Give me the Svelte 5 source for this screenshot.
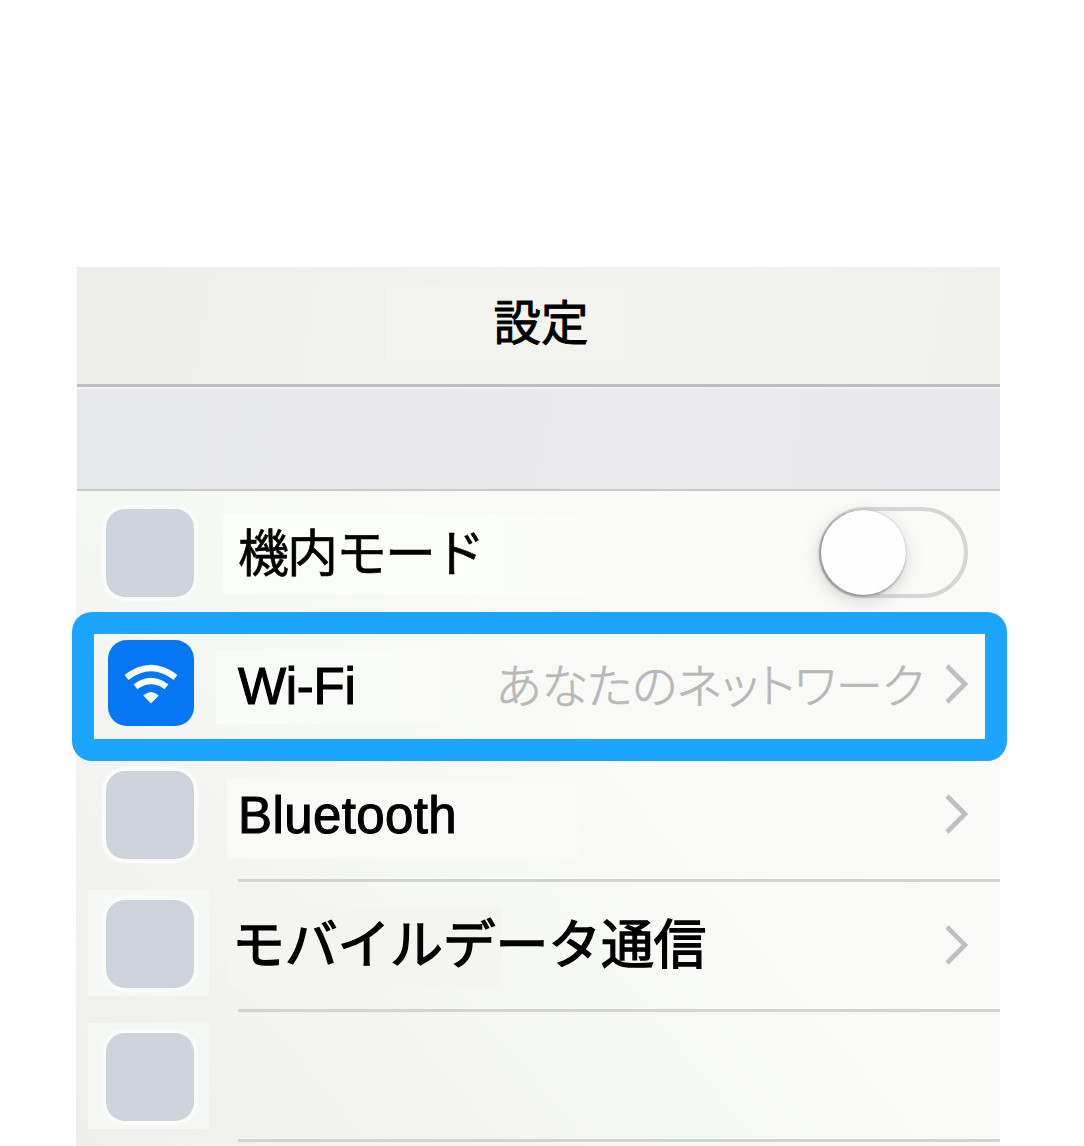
<script>
  const rows = [
    { id: 'airplane', label: '機内モード', control: 'toggle' },
    { id: 'wifi', label: 'Wi-Fi', value: 'あなたのネットワーク', control: 'chevron' },
    { id: 'bluetooth', label: 'Bluetooth', control: 'chevron' },
    { id: 'mobile', label: 'モバイルデータ通信', control: 'chevron' },
    { id: 'blank', label: '', control: '' }
  ];
</script>

<main class="page">
  <section class="panel">
    <header class="title-bar"><h1><span>設定</span></h1></header>
    <div class="band"></div>
    <div class="list">
      {#each rows as row (row.id)}
        <div class="row {row.id}">
          <div class="icon-box">
            <div class="icon">
              {#if row.id === 'wifi'}
                <svg viewBox="0 0 86 86" width="86" height="86">
                  <g fill="none" stroke="#fafcf4" stroke-width="6.4">
                    <path d="M18.5 37.5 Q43 18.5 67.5 37.5" />
                    <path d="M27.5 46.8 Q43 35.2 58.5 46.8" />
                  </g>
                  <path fill="#fafcf4" d="M35.2 55.5 Q43 48.5 50.8 55.5 L43 63.5 Z" />
                </svg>
              {/if}
            </div>
          </div>
          <div class="label"><span>{row.label}</span></div>
          {#if row.value}<div class="value"><span>{row.value}</span></div>{/if}
          {#if row.control === 'chevron'}
            <svg class="chevron" viewBox="0 0 26 42" width="26" height="42">
              <path d="M3 3 L21 21 L3 39" fill="none" stroke="#bfbfc2" stroke-width="4.6" />
            </svg>
          {:else if row.control === 'toggle'}
            <div class="toggle"><div class="knob"></div></div>
          {/if}
        </div>
      {/each}
    </div>
    <div class="highlight"></div>
  </section>
</main>

<style>
  :global(body) { margin: 0; background: #fff; }
  .page {
    box-sizing: border-box;
    width: 1084px;
    height: 1146px;
    padding: 267px 84px 0 77px;
    overflow: hidden;
    background: #fff;
    font-family: "Liberation Sans", "Noto Sans CJK JP", sans-serif;
    color: #000;
  }
  .panel { position: relative; width: 923px; height: 879px; }
  .title-bar {
    box-sizing: border-box;
    height: 120px;
    padding: 20px 0 0 309px;
    background: linear-gradient(100deg, #edeeea, #f1f2ee 40%, #f2f3ee 60%, #eff0eb);
    border-bottom: 3px solid #bdbdbe;
  }
  h1 {
    width: 310px;
    height: 73px;
    margin: 0;
    background: linear-gradient(90deg, #f3f4ef 60%, #f2f3ee);
    font: 400 47.5px/66px "Noto Sans CJK JP", sans-serif;
    -webkit-text-stroke: .9px #000;
    text-align: center;
  }
  .band {
    box-sizing: border-box;
    height: 104px;
    border-top: 2px solid #f3f3f6;
    border-bottom: 2px solid #c9cac9;
    background: linear-gradient(100deg, #e6e7e9, #e9e9ec 45%, #ebebed 65%, #e7e6ea);
  }
  .list {
    height: 655px;
    margin-left: -1px;
    padding-left: 1px;
    overflow: hidden;
    background: linear-gradient(50deg, #eeefec, #f3f4f1 22%, #f6f8f4 42%, #f9faf7 62%, #fafbf8);
  }
  .row {
    position: relative;
    box-sizing: border-box;
    display: flex;
    align-items: flex-start;
    height: 130px;
    padding-left: 11px;
  }
  .bluetooth, .mobile, .blank { background: linear-gradient(#d3d4d2, #d3d4d2) 161px bottom / 762px 3px no-repeat; }
  .bluetooth { height: 131px; }
  .icon-box { flex: none; box-sizing: border-box; width: 121px; height: 106px; padding: 10px 0 0 18px; }
  .icon {
    width: 88px;
    height: 88px;
    border-radius: 19px;
    background: #cfd4dc;
    box-shadow: 0 0 2px 4px #fafcf9;
  }
  .airplane .icon-box { margin-top: 8px; }
  .wifi .icon-box { margin-top: 9px; padding-left: 20px; }
  .wifi .icon { width: 86px; height: 86px; background: #0677f4; box-shadow: 0 0 2px 1px #f3f6f3; }
  .bluetooth .icon-box { margin-top: 10px; }
  .mobile .icon-box { margin-top: 8px; background: #f5f8f4; }
  .blank .icon-box { margin-top: 11px; background: #f4f7f3; }
  .icon svg { display: block; }
  .label { flex: none; box-sizing: border-box; white-space: nowrap; }
  .label span, .value span, h1 span { display: inline-block; }
  .airplane .label {
    width: 373px; height: 81px; margin: 23px 0 0 14px; padding-left: 15px;
    background: linear-gradient(90deg, #fbfdf9 70%, #fafbf8);
    font: 400 51px/72px "Noto Sans CJK JP", sans-serif;
    letter-spacing: -2px;
    -webkit-text-stroke: .6px #000;
  }
  .wifi .label {
    width: 230px; height: 75px; margin: 28px 0 0 7px; padding-left: 22px;
    background: linear-gradient(90deg, #f9fbf8 70%, #f9faf8);
    font-size: 51px; line-height: 75px;
    letter-spacing: -.3px;
    -webkit-text-stroke: 1.1px #000;
  }
  .bluetooth .label {
    width: 353px; height: 80px; margin: 28px 0 0 18px; padding-left: 11px;
    background: linear-gradient(90deg, #f9f9f7 70%, #f9faf7);
    font-size: 51px; line-height: 73px;
    letter-spacing: .4px;
    -webkit-text-stroke: 1.1px #000;
  }
  .mobile .label {
    width: 273px; height: 80px; margin: 25px 0 0 19px; padding-left: 4px;
    background: #f4f5f1;
    font: 400 53px/69px "Noto Sans CJK JP", sans-serif;
    letter-spacing: -.3px;
    -webkit-text-stroke: 1.3px #000;
  }
  .value {
    margin: 28px 0 0 auto;
    padding-right: 76px;
    color: #b8b8b8;
    font: 300 47px/68px "Noto Sans CJK JP", sans-serif;
    font-feature-settings: "palt";
    letter-spacing: -.25px;
    -webkit-text-stroke: .7px #b8b8b8;
    white-space: nowrap;
  }
  .chevron { position: absolute; right: 30px; top: 42px; }
  .toggle {
    box-sizing: border-box;
    width: 149px;
    height: 91px;
    margin: 16px 32px 0 auto;
    border: 4px solid #d5d6d5;
    border-radius: 46px;
  }
  .knob {
    width: 85px;
    height: 85px;
    margin: -1px 0 0 -2px;
    border-radius: 50%;
    background: #fdfefd;
    box-shadow: -1px 1px 2px 1px #9a9a9a, -1px 5px 16px #a9a9a980;
  }
  .highlight {
    position: absolute;
    box-sizing: border-box;
    left: -5px;
    top: 345px;
    width: 935px;
    height: 149px;
    border: 22px solid #1ca5ff;
    border-radius: 20px;
  }
</style>
